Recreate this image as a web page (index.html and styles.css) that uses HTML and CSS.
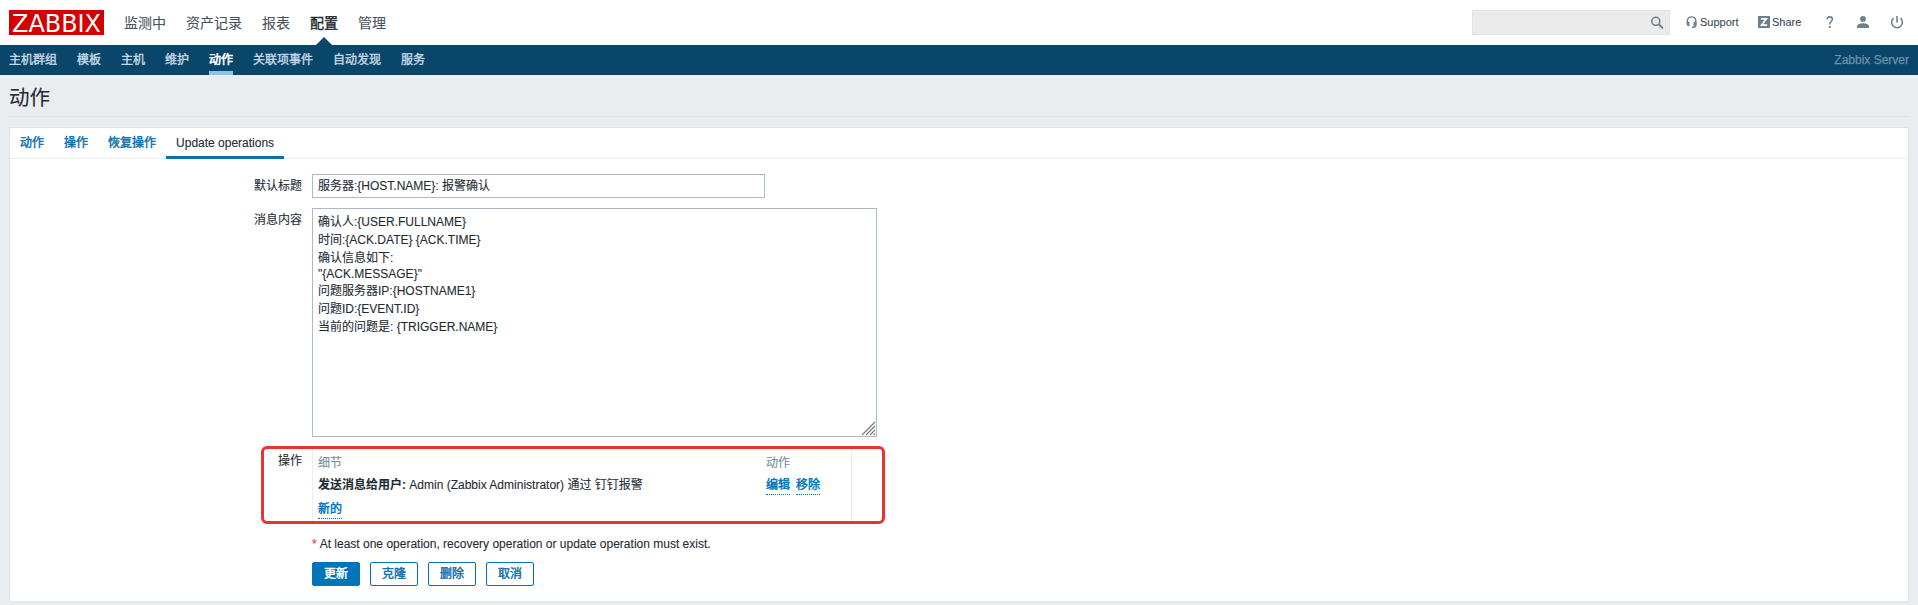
FILE: index.html
```html
<!DOCTYPE html>
<html lang="zh-CN">
<head>
<meta charset="utf-8">
<title>动作</title>
<link rel="stylesheet" href="styles.css">
</head>
<body>
<header class="top">
  <svg class="logo" width="95" height="25" viewBox="0 0 95 25"><rect width="95" height="25" fill="#d40000"/><text x="3" y="22" textLength="89" lengthAdjust="spacingAndGlyphs">ZABBIX</text></svg>
  <nav class="main-nav"><a>监测中</a><a>资产记录</a><a>报表</a><a class="current">配置</a><a>管理</a></nav>
  <div class="tools">
    <div class="search"><svg width="14" height="14" viewBox="0 0 14 14"><circle cx="5.8" cy="5.3" r="4" fill="none" stroke="#6f7f88" stroke-width="1.6"/><path d="M8.700 8.200L12.900 12.400" stroke="#6f7f88" stroke-width="2"/></svg></div>
    <a class="support"><svg width="12" height="13" viewBox="0 0 12 13"><path d="M1.300 6.800V5.400C1.300 2.600 3 .9 5.500.9s4.300 1.700 4.300 4.500V9.500Q9.800 11.200 8 11.200H6" fill="none" stroke="#6d808c" stroke-width="1.400"/><path d="M.6 5.800H3.500V10.300H2.300Q.6 9.800.6 8ZM7.500 5.800H10.500V9L9.300 10.300H7.500Z" fill="#6d808c"/></svg>Support</a>
    <a class="share"><svg width="12" height="12" viewBox="0 0 12 12"><rect width="12" height="12" fill="#6d808c"/><path d="M3 2.900H8.300L3.600 9.100H9.100" fill="none" stroke="#fff" stroke-width="1.700"/></svg>Share</a>
    <svg class="help" width="8" height="13" viewBox="0 0 8 13"><path d="M1.100 3.200C1.200 1.500 2.300.9 3.700.9 5.300.9 6.400 1.700 6.400 3.200 6.400 5.300 3.800 5.400 3.800 8.500" fill="none" stroke="#6d808c" stroke-width="1.600"/><rect x="2.900" y="10.100" width="1.900" height="1.900" fill="#6d808c"/></svg>
    <svg class="user" width="12" height="12" viewBox="0 0 12 12" fill="#6d808c"><circle cx="6" cy="2.900" r="2.900"/><path d="M0 12V10.200C0 8.200 3.500 7.200 6 7.200S12 8.200 12 10.200V12Z"/></svg>
    <svg class="power" width="14" height="13" viewBox="0 0 14 13" fill="none" stroke="#6d808c" stroke-width="1.600"><path d="M7 0V6.500M3.500 2.200A5.400 5.400 0 1 0 10.500 2.200"/></svg>
  </div>
</header>
<nav class="sub-nav"><a>主机群组</a><a>模板</a><a>主机</a><a>维护</a><a class="selected">动作</a><a>关联项事件</a><a>自动发现</a><a>服务</a><span class="server">Zabbix Server</span></nav>
<main>
  <h1>动作</h1>
  <section class="panel">
    <div class="tabs"><a>动作</a><a>操作</a><a>恢复操作</a><a class="active">Update operations</a></div>
    <div class="form">
      <label>默认标题</label>
      <div class="input">服务器:{HOST.NAME}: 报警确认</div>
      <label>消息内容</label>
      <div class="textarea">
        <p>确认人:{USER.FULLNAME}</p><p>时间:{ACK.DATE} {ACK.TIME}</p><p>确认信息如下:</p><p class="latin">"{ACK.MESSAGE}"</p><p>问题服务器IP:{HOSTNAME1}</p><p>问题ID:{EVENT.ID}</p><p>当前的问题是: {TRIGGER.NAME}</p>
        <svg class="grip" width="15" height="15" viewBox="0 0 15 15"><path d="M1 14L14 1M5 14L14 5M9 14L14 9M12.500 14L14 12.500" stroke="#777" stroke-width="1.100"/></svg>
      </div>
      <div class="operations">
        <label>操作</label>
        <div class="table">
          <span class="head">细节</span><span class="head">动作</span>
          <span><b>发送消息给用户:</b> Admin (Zabbix Administrator) 通过 钉钉报警</span><span class="links"><a class="link">编辑</a><a class="link">移除</a></span>
          <span><a class="link">新的</a></span>
        </div>
      </div>
      <div class="note"><i>*</i>At least one operation, recovery operation or update operation must exist.</div>
      <div class="buttons"><button class="primary">更新</button><button>克隆</button><button>删除</button><button>取消</button></div>
    </div>
  </section>
</main>
</body>
</html>
```
FILE: styles.css
```css
* { box-sizing: border-box; }
body {
  margin: 0;
  height: 605px;
  overflow: hidden;
  background: #e9edf0;
  color: #1f2c33;
  font: 12px/18px "Liberation Sans", "Noto Sans CJK SC", sans-serif;
  -webkit-text-stroke: .1px;
}
.top { display: flex; height: 45px; padding: 10px 14px 0 9px; background: #fff; }
.logo { flex: none; overflow: visible; }
.logo text { font: 24.5px "DejaVu Sans", sans-serif; fill: #fff; }
.main-nav { display: flex; gap: 20px; margin-left: 20px; font-size: 14px; line-height: 26px; color: #48545c; }
.current { position: relative; color: #1f2c33; -webkit-text-stroke: .35px; }
.current::after {
  content: "";
  position: absolute;
  left: 6px;
  top: 27px;
  border: 8px solid transparent;
  border-top: 0;
  border-bottom-color: #0a466a;
}
.tools { display: flex; margin-left: auto; font-size: 11px; line-height: 24px; color: #3c4b54; }
.search { width: 198px; height: 25px; padding: 5px 5px 0 0; border: 1px solid #dfe4e7; background: #ebebeb; display: flex; justify-content: flex-end; }
.support, .share { display: flex; }
.support { margin-left: 16px; width: 72px; gap: 2px; }
.support svg { margin-top: 6px; }
.share { width: 68px; gap: 2px; }
.share svg { margin-top: 6px; }
.help { margin-top: 6px; width: 8px; }
.user { margin: 6px 0 0 23px; }
.power { margin: 6px 0 0 21px; }
.sub-nav { display: flex; gap: 20px; height: 30px; padding: 0 9px; background: #0a466a; color: #c4d7e3; line-height: 30px; -webkit-text-stroke: .4px; }
.sub-nav .selected { color: #fff; -webkit-text-stroke: .55px; border-bottom: 4px solid #87c4ee; }
.server { margin-left: auto; color: #6c91aa; -webkit-text-stroke: .25px; }
main { padding: 0 9px; }
h1 { margin: 0; height: 42px; border-bottom: 1px solid #dfe4e7; font-size: 20.5px; font-weight: 400; line-height: 45px; }
.panel { margin-top: 10px; height: 475px; background: #fff; border: 1px solid #dfe4e7; }
.tabs { display: flex; height: 31px; border-bottom: 1px solid #ebeef0; line-height: 30px; color: #0f70ab; -webkit-text-stroke: .45px; }
.tabs a { height: 31px; padding: 0 10px; }
.tabs .active { width: 118px; color: #1f2c33; -webkit-text-stroke: .1px; border-bottom: 3px solid #0f70ab; white-space: nowrap; }
.form { display: grid; grid-template-columns: 292px 565px; column-gap: 10px; padding-top: 15px; }
.form label { text-align: right; line-height: 24px; }
.input { width: 453px; height: 24px; padding: 0 5px; border: 1px solid #acbbc2; line-height: 22px; }
.textarea { position: relative; height: 229px; padding: 4px 5px; border: 1px solid #acbbc2; }
.input, .form > label { margin-bottom: 10px; }
.textarea p { margin: 0; height: 18px; }
.textarea .latin { height: 15px; line-height: 15px; }
.grip { position: absolute; right: 0; bottom: 0; }
.operations { grid-column: 1 / -1; display: flex; gap: 10px; width: 624px; height: 78px; margin: 9px 0 0 251px; border: 3px solid #e8342c; border-radius: 6px; }
.operations label { width: 38px; }
.table { display: grid; grid-template-columns: 448px 1fr; grid-template-rows: 23px 24px 23px; width: 540px; height: 72px; padding: 2px 0 0 5px; border: 1px solid #ebeef0; border-width: 0 1px; line-height: 23px; }
.head { color: #768d99; line-height: 24px; }
.links { display: flex; gap: 6px; }
.link { color: #0275b8; -webkit-text-stroke: .45px; display: inline-block; height: 21px; border-bottom: 1px dotted #0275b8; line-height: 23px; }
.note { grid-column: 2; margin-top: 11px; display: flex; gap: 3px; }
.note i { color: #e33734; font-style: normal; }
.buttons { grid-column: 2; display: flex; gap: 10px; margin-top: 9px; }
button { width: 48px; height: 24px; padding: 0; border: 1px solid #0275b8; border-radius: 2px; background: #fff; color: #0f70ab; font: 12px/20px "Liberation Sans", "Noto Sans CJK SC", sans-serif; -webkit-text-stroke: .45px; }
.primary { background: #0275b8; color: #fff; }
```
